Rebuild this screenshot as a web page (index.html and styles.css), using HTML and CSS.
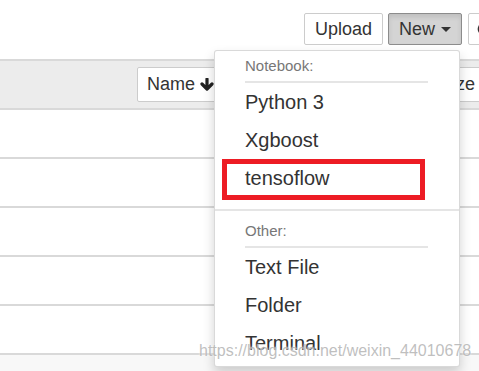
FILE: index.html
```html
<!DOCTYPE html>
<html lang="en">
<head>
    <meta charset="UTF-8">
    <title>Files</title>
    <link rel="stylesheet" href="styles.css">
</head>
<body>
<div class="page">

    <!-- Toolbar -->
    <div class="toolbar">
        <button class="btn">Upload</button>
        <button class="btn btn-open">New <span class="caret"></span></button>
        <button class="btn btn-icon">
            <svg width="16" height="16" viewBox="0 0 16 16">
                <path d="M13 8a5 5 0 1 1-1.6-3.7" fill="none" stroke="#333" stroke-width="2.6"/>
                <path d="M9.5 1.5h5v5z" fill="#333"/>
            </svg>
        </button>
    </div>

    <!-- File list -->
    <div class="list">
        <div class="list-header">
            <button class="btn sort">Name
                <svg class="arrow" width="14" height="13" viewBox="0 0 14 13">
                    <path d="M7 1v9M2 6l5 5 5-5" fill="none" stroke="#222" stroke-width="3.2" stroke-linecap="round" stroke-linejoin="round"/>
                </svg>
            </button>
            <button class="btn sort size">Size</button>
        </div>
        <div class="row"></div>
        <div class="row"></div>
        <div class="row"></div>
        <div class="row"></div>
        <div class="row"></div>
    </div>

    <!-- New dropdown -->
    <div class="menu">
        <div class="menu-header">Notebook:</div>
        <div class="sub-divider"></div>
        <div class="item">Python 3</div>
        <div class="item">Xgboost</div>
        <div class="item marked">tensoflow</div>
        <div class="divider"></div>
        <div class="menu-header">Other:</div>
        <div class="sub-divider"></div>
        <div class="item">Text File</div>
        <div class="item">Folder</div>
        <div class="item">Terminal</div>
    </div>

    <div class="watermark">https://blog.csdn.net/weixin_44010678</div>
</div>
</body>
</html>
```

FILE: styles.css
```css
html, body {
    margin: 0;
    padding: 0;
}
body {
    font-family: "Liberation Sans", Arial, sans-serif;
    color: #333;
    background: #f8f8f8;
}
.page {
    position: relative;
    width: 479px;
    height: 371px;
    overflow: hidden;
    background: #f8f8f8;
}

/* Toolbar */
.toolbar {
    display: flex;
    gap: 5px;
    height: 59px;
    box-sizing: border-box;
    padding: 13px 0 0 304px;
    background: white;
    white-space: nowrap;
}
.btn {
    font-family: inherit;
    font-size: 18px;
    color: #333;
    height: 32px;
    padding: 0 10px;
    background: white;
    border: 1.5px solid #ccc;
    border-radius: 2px;
    display: flex;
    align-items: center;
    flex-shrink: 0;
}
.btn-open {
    background: #d4d4d4;
    border-color: #8c8c8c;
    box-shadow: inset 0 3px 5px rgba(0, 0, 0, 0.1);
}
.caret {
    display: inline-block;
    margin-left: 6px;
    width: 0;
    height: 0;
    border-left: 5.5px solid transparent;
    border-right: 5.5px solid transparent;
    border-top: 5.5px solid #333;
}
.btn-icon {
    margin-left: 1px;
    width: 40px;
    padding: 0 7px;
}

/* List */
.list {
    border-top: 2px solid #d9d9d9;
}
.list-header {
    display: flex;
    height: 49px;
    box-sizing: border-box;
    padding: 6px 0 0 137px;
    background: #ececec;
    border-bottom: 2px solid #d9d9d9;
}
.sort {
    height: 35px;
    padding: 0 9px;
}
.arrow {
    margin-left: 5px;
}
.size {
    margin-left: 205px;
    padding: 0 10px;
    width: 70px;
}
.row {
    height: 47px;
    background: white;
    border-bottom: 2px solid #d9d9d9;
}

/* Dropdown */
.menu {
    position: absolute;
    left: 214px;
    top: 50px;
    width: 246px;
    height: 317px;
    box-sizing: border-box;
    padding-top: 5px;
    background: white;
    border: 1px solid rgba(0, 0, 0, 0.15);
    border-radius: 3px;
    box-shadow: 0 6px 12px rgba(0, 0, 0, 0.18);
}
.menu-header {
    font-size: 15px;
    line-height: 20px;
    color: #777;
    padding-left: 30px;
}
.sub-divider {
    height: 2px;
    margin: 5px 31px 0 30px;
    background: #e5e5e5;
}
.divider {
    height: 2px;
    margin: 12px 0 10px;
    background: #e5e5e5;
}
.item {
    font-size: 20px;
    line-height: 38px;
    padding-left: 30px;
    color: #333;
}
.marked {
    position: relative;
}
.marked::after {
    content: "";
    position: absolute;
    left: 7px;
    top: 0;
    width: 203px;
    height: 41px;
    box-sizing: border-box;
    border: 5px solid #ed1c24;
}

/* Watermark */
.watermark {
    position: absolute;
    left: 199px;
    top: 341px;
    font-size: 16px;
    line-height: 20px;
    color: rgba(170, 170, 170, 0.75);
    text-shadow: 0 0 2px white;
    white-space: nowrap;
}
```
